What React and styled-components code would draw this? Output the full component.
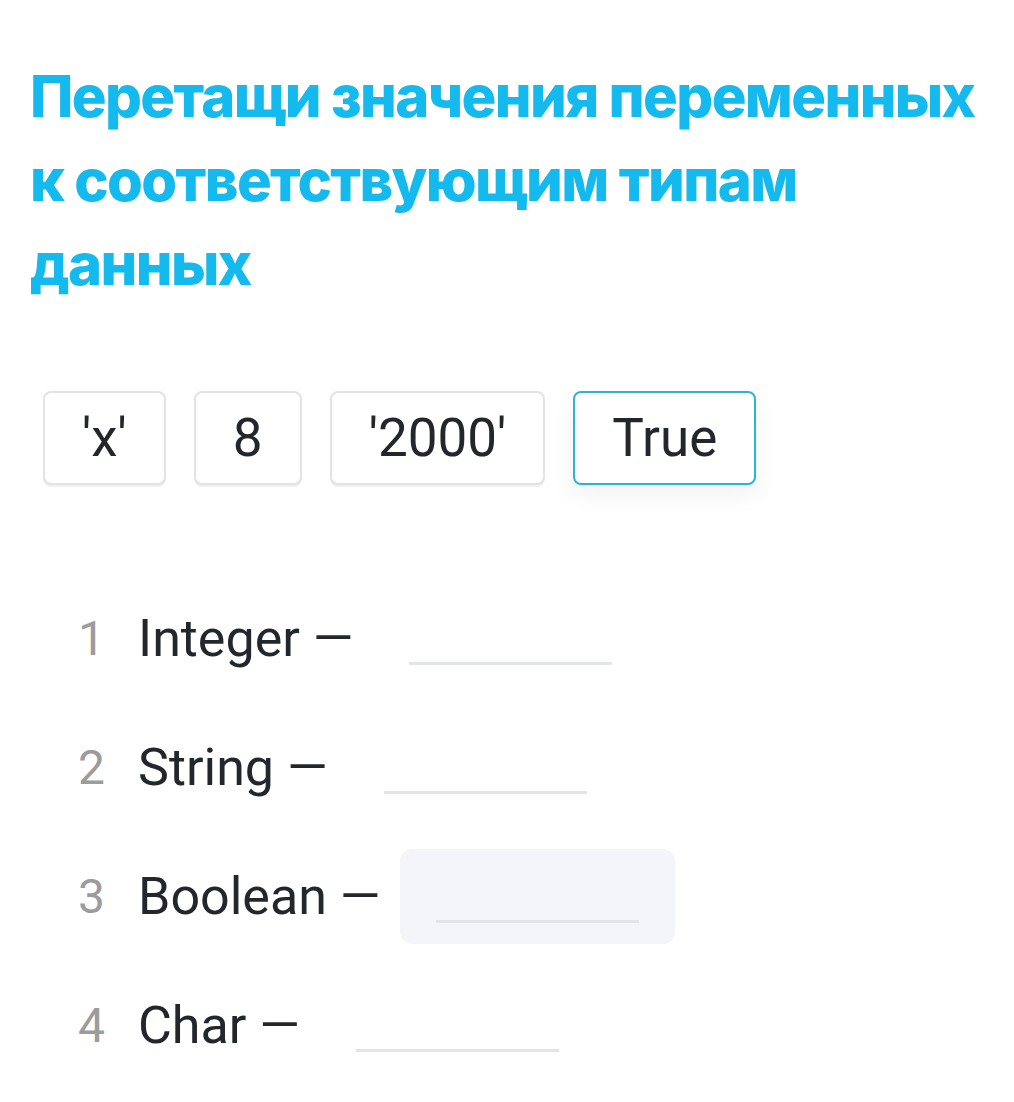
import React from "react";
import styled, { createGlobalStyle } from "styled-components";

const GlobalStyle = createGlobalStyle`
  body {
    margin: 0;
    background: #ffffff;
    font-family: Roboto, "Noto Sans", sans-serif;
  }
`;

const Page = styled.div`
  width: 1014px;
  min-height: 1102px;
  box-sizing: border-box;
  padding: 54px 0 0 30px;
`;

const Title = styled.h1`
  margin: 0;
  font-family: Inter, Roboto, sans-serif;
  font-weight: 800;
  font-size: 58px;
  line-height: 84px;
  letter-spacing: -1.65px;
  color: #14b9ee;
  max-width: 975px;
`;

const Chips = styled.div`
  display: flex;
  gap: 28px;
  margin: 85px 0 0 13px;
`;

const Chip = styled.div`
  height: 94px;
  box-sizing: border-box;
  padding: 0 37px;
  display: flex;
  align-items: center;
  border: 2px solid ${(p) => (p.$active ? "#2cb4d8" : "#e3e3e3")};
  border-radius: 8px;
  background: #fff;
  box-shadow: ${(p) =>
    p.$active
      ? "0 10px 24px rgba(0, 0, 0, 0.06)"
      : "0 2px 0 rgba(0, 0, 0, 0.06)"};
  font-size: 53px;
  color: #23272b;
`;

const List = styled.div`
  display: flex;
  flex-direction: column;
  gap: 34px;
  margin: 106px 0 0 48px;
`;

const Row = styled.div`
  display: flex;
  align-items: center;
  height: 95px;
`;

const Num = styled.span`
  width: 60px;
  font-size: 48px;
  color: #9b9c9e;
  letter-spacing: -1px;
`;

const Label = styled.span`
  font-size: 52px;
  color: #23272b;
`;

const Blank = styled.div`
  margin-left: 20px;
  width: 275px;
  height: 95px;
  box-sizing: border-box;
  padding: 0 36px 21px;
  display: flex;
  align-items: flex-end;
  border-radius: 12px;
  background: ${(p) => (p.$hover ? "#f4f5f9" : "transparent")};
`;

const Line = styled.div`
  width: 100%;
  height: 3px;
  background: #e3e4e6;
`;

const values = ["'x'", "8", "'2000'", "True"];
const rows = ["Integer", "String", "Boolean", "Char"];

export default function App() {
  return (
    <Page>
      <GlobalStyle />
      <Title>Перетащи значения переменных к соответствующим типам данных</Title>
      <Chips>
        {values.map((v) => (
          <Chip key={v} $active={v === "True"}>
            {v}
          </Chip>
        ))}
      </Chips>
      <List>
        {rows.map((r, i) => (
          <Row key={r}>
            <Num>{i + 1}</Num>
            <Label>{r} —</Label>
            <Blank $hover={r === "Boolean"}>
              <Line />
            </Blank>
          </Row>
        ))}
      </List>
    </Page>
  );
}
